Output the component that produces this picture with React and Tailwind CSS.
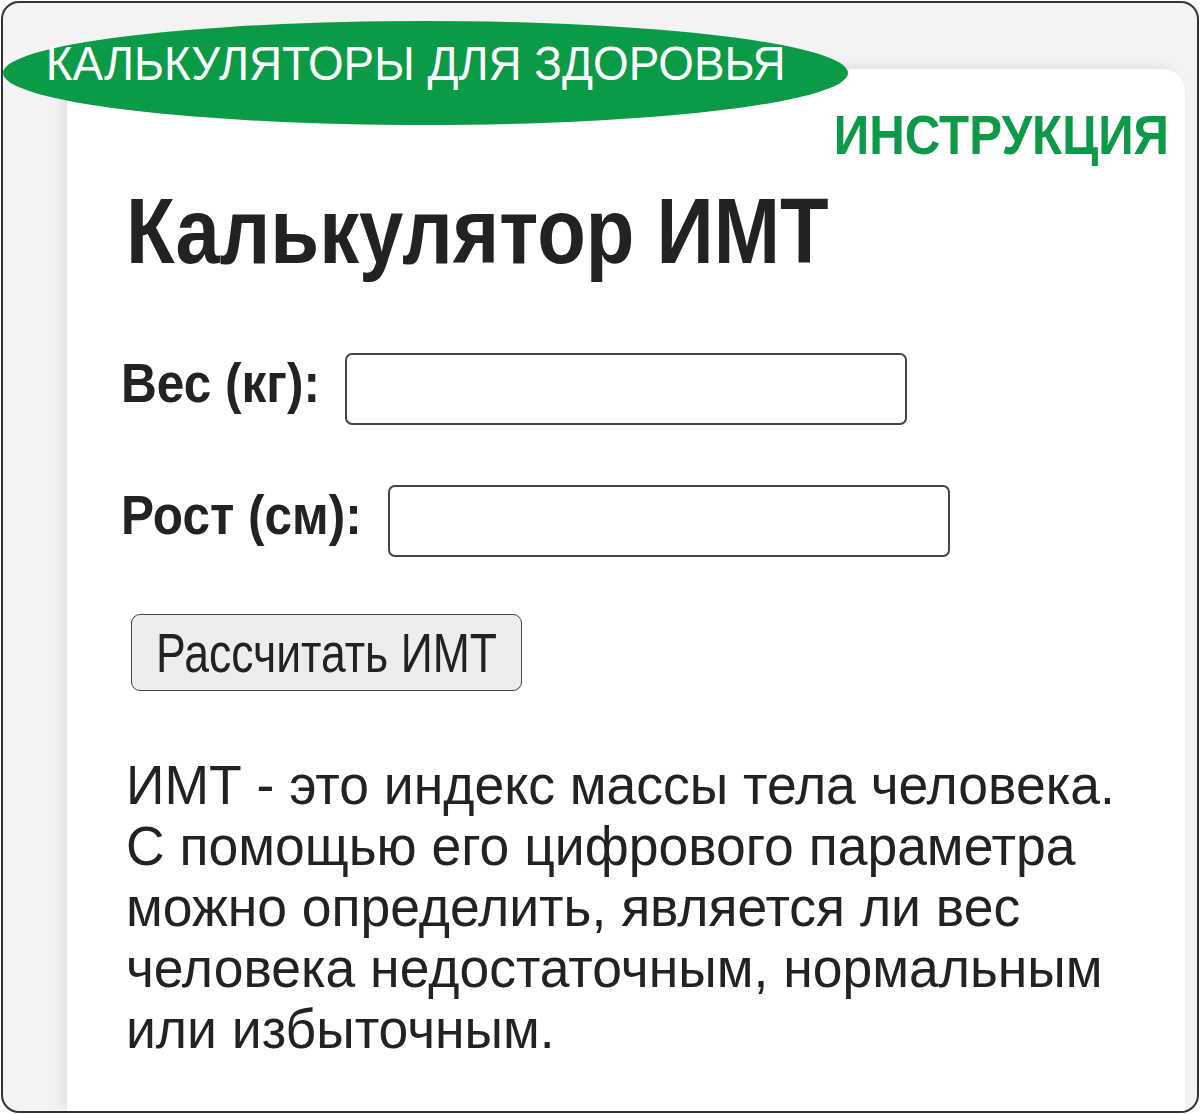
import React, { useState } from 'react';

const sans = "font-['Liberation_Sans',Arial,sans-serif]";

const Field = ({ label, labelWidth, value, onChange }) => (
  <div className="flex items-center gap-[28px]">
    <label className={`${sans} ${labelWidth} -mt-[12px] whitespace-nowrap font-bold text-[56px] leading-none text-[#222]`}>
      <span className="inline-block origin-left scale-x-[0.885]">{label}</span>
    </label>
    <input
      type="text"
      value={value}
      onChange={(e) => onChange(e.target.value)}
      className="w-[562px] h-[72px] rounded-[7px] border-2 border-[#444] bg-white px-3 text-[40px] outline-none"
    />
  </div>
);

const App = () => {
  const [weight, setWeight] = useState('');
  const [height, setHeight] = useState('');

  return (
    <div className="w-[1200px] h-[1114px] p-[1px] bg-white">
      <div className="relative w-full h-full rounded-[18px] border-2 border-[#333] bg-[#f3f3f3] overflow-hidden flex flex-col">
        {/* green badge */}
        <div className="absolute left-0 top-[18px] w-[845px] h-[104px] rounded-[50%] bg-[#0b9a46] flex items-center justify-center z-10">
          <span className={`${sans} inline-block whitespace-nowrap text-white text-[49px] leading-none scale-x-[0.935] -ml-[20px] -mt-[20px]`}>
            КАЛЬКУЛЯТОРЫ ДЛЯ ЗДОРОВЬЯ
          </span>
        </div>

        <div className="flex-1 mt-[66px] ml-[64px] mr-[12px] bg-white rounded-tr-[22px] shadow-[-6px_-4px_10px_rgba(0,0,0,0.07)] flex flex-col pl-[54px] pr-[16px]">
          <div className={`${sans} self-end mt-[38px] whitespace-nowrap font-bold text-[#0d9a48] text-[56px] leading-none`}>
            <span className="inline-block origin-right scale-x-[0.88]">ИНСТРУКЦИЯ</span>
          </div>

          <h1 className={`${sans} ml-[5px] mt-[22px] whitespace-nowrap font-bold text-[#222] text-[92px] leading-none`}>
            <span className="inline-block origin-left scale-x-[0.865]">Калькулятор ИМТ</span>
          </h1>

          <div className="flex flex-col gap-[60px] mt-[76px]">
            <Field label="Вес (кг):" labelWidth="w-[196px]" value={weight} onChange={setWeight} />
            <Field label="Рост (см):" labelWidth="w-[239px]" value={height} onChange={setHeight} />
          </div>

          <button className={`${sans} self-start ml-[10px] mt-[57px] w-[391px] h-[77px] rounded-[9px] border-[1.5px] border-[#444] bg-[#ededed] text-[#222] text-[56px] leading-none whitespace-nowrap flex items-center justify-center`}>
            <span className="inline-block scale-x-[0.795]">Рассчитать ИМТ</span>
          </button>

          <p className={`${sans} ml-[5px] mt-[63px] whitespace-nowrap text-[#222] text-[56px] leading-[61px]`}>
            <span className="inline-block origin-left scale-x-[0.955]">
              ИМТ - это индекс массы тела человека.
              <br />С помощью его цифрового параметра
              <br />можно определить, является ли вес
              <br />человека недостаточным, нормальным
              <br />или избыточным.
            </span>
          </p>
        </div>
      </div>
    </div>
  );
};

export default App;
